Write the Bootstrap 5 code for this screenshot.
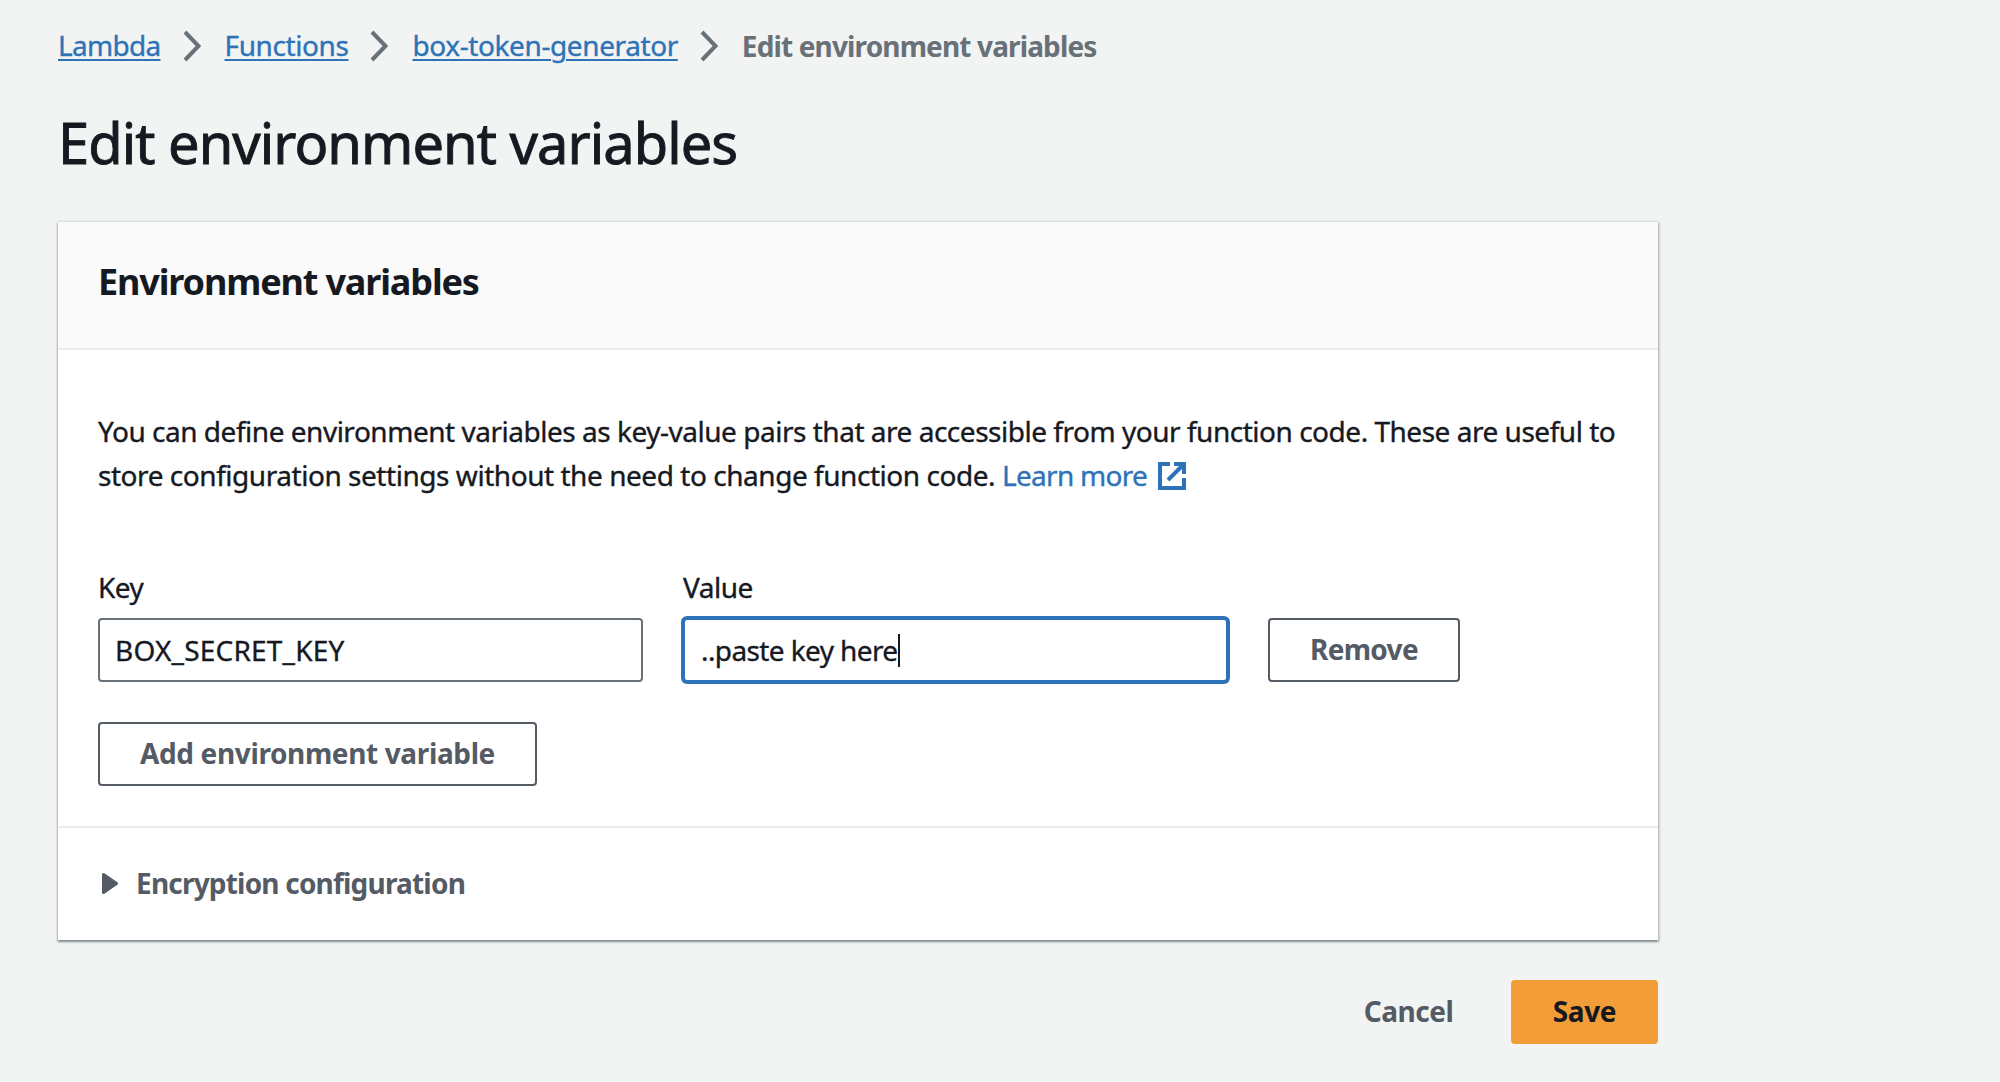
<!DOCTYPE html>
<html lang="en">
<head>
<meta charset="utf-8">
<title>Edit environment variables</title>
<meta name="viewport" content="width=device-width, initial-scale=1">
<link rel="stylesheet" href="https://cdn.jsdelivr.net/npm/bootstrap@5.3.0/dist/css/bootstrap.min.css">
<style>
body { background: #f2f4f3; color: #16191f; font-family: "Noto Sans", sans-serif; font-size: 28px; line-height: 44px; letter-spacing: -.48px; -webkit-text-stroke: .35px currentColor; overflow: hidden; }
.page { width: 1600px; margin-left: 58px; padding-top: 23px; }
.trail { height: 44px; white-space: nowrap; }
.trail a { color: #2e73b8; text-decoration-thickness: 2px; text-underline-offset: 3px; letter-spacing: -.4px; }
.trail .trail-first { letter-spacing: -.7px; }
.trail svg { width: 18px; height: 32px; flex: none; margin: 2px 24px 0 22px; }
.crumb-now { color: #687078; font-weight: 700; letter-spacing: -.86px; -webkit-text-stroke: 0; padding-top: 1px; }
.page-title { font-size: 56px; line-height: 70px; font-weight: 400; letter-spacing: -.95px; margin: 40px 0 45px; -webkit-text-stroke: .9px currentColor; }
.panel { border: 0; border-radius: 0; box-shadow: 0 2px 2px 0 rgba(0,28,36,.3), 1px 1px 2px 1px rgba(0,28,36,.15), -1px 1px 2px 0 rgba(0,28,36,.15), 0 -2px 0 0 #eaeded; }
.panel-head { background: #fafafa; border-bottom: 2px solid #eaeded; height: 128px; padding: 38px 40px 0; border-radius: 0 !important; }
.panel-head h2 { font-size: 36px; line-height: 44px; font-weight: 700; letter-spacing: -1.14px; margin: 0; -webkit-text-stroke: 0; }
.panel-main { padding: 59px 40px 40px; }
.intro a { color: #2e73b8; text-decoration: none; letter-spacing: -.7px; }
.intro { white-space: nowrap; margin-bottom: 68px; }
.intro .intro-end { letter-spacing: -.455px; }
.intro svg { width: 28px; height: 28px; margin-left: 4px; vertical-align: -4px; }
.fields { gap: 40px; }
.field-col { width: 545px; }
.field-col label { display: block; height: 44px; margin-bottom: 9px; }
.field-box { height: 64px; border: 2px solid #687078; border-radius: 4px; padding: 0 15px; font-size: 28px; color: #16191f; background: #fff; line-height: 60px; letter-spacing: .2px; }
.field-active { border-color: #2e73b8; box-shadow: 0 0 0 2px #2e73b8; letter-spacing: -.6px; padding-left: 16px; }
.caret { width: 2px; height: 33px; background: #16191f; }
.action { height: 64px; border: 2px solid #545b64; border-radius: 4px; font-size: 28px; line-height: 44px; font-weight: 700; color: #545b64; padding: 7px 0 9px; letter-spacing: -.37px; -webkit-text-stroke: 0; }
.action-remove { width: 192px; background: #fff; letter-spacing: -.7px; }
.action-add { width: 439px; background: #fff; margin-top: 40px; }
.action-save { width: 147px; background: #f29d38; border-color: #f29d38; color: #16191f; }
.action-cancel { border-color: transparent; width: 149px; letter-spacing: -.5px; }
.panel-more { border-top: 2px solid #eaeded; height: 114px; padding: 0 40px 2px 44px; color: #545b64; font-weight: 700; letter-spacing: -.8px; -webkit-text-stroke: 0; }
.panel-more svg { width: 16px; height: 21px; margin-right: 18px; }
.page-actions { margin-top: 40px; gap: 28px; }
</style>
<script src="https://cdn.jsdelivr.net/npm/bootstrap@5.3.0/dist/js/bootstrap.bundle.min.js"></script>
</head>
<body>
<main class="page">
  <nav class="trail d-flex align-items-center" aria-label="breadcrumb">
    <a class="trail-first" href="#">Lambda</a>
    <svg viewBox="0 0 18 32"><path d="M2 2 15.500 16 2 30" fill="none" stroke="#687078" stroke-width="4"/></svg>
    <a href="#">Functions</a>
    <svg viewBox="0 0 18 32"><path d="M2 2 15.500 16 2 30" fill="none" stroke="#687078" stroke-width="4"/></svg>
    <a href="#">box-token-generator</a>
    <svg viewBox="0 0 18 32"><path d="M2 2 15.500 16 2 30" fill="none" stroke="#687078" stroke-width="4"/></svg>
    <span class="crumb-now">Edit environment variables</span>
  </nav>
  <h1 class="page-title">Edit environment variables</h1>

  <section class="card panel">
    <div class="card-header panel-head"><h2>Environment variables</h2></div>
    <div class="card-body panel-main">
      <p class="intro">You can define environment variables as key-value pairs that are accessible from your function code. These are useful to<br><span class="intro-end">store configuration settings without the need to change function code.</span> <a href="#">Learn more
        <svg viewBox="0 0 28 28" fill="none" stroke="#2e73b8" stroke-width="4"><path d="M12 2H2V26H26V16"/><path d="M16 2H26V12M26 2 10 18"/></svg></a></p>
      <div class="fields d-flex align-items-end">
        <div class="field-col">
          <label for="envKey">Key</label>
          <input id="envKey" class="form-control field-box" value="BOX_SECRET_KEY">
        </div>
        <div class="field-col">
          <label>Value</label>
          <div class="form-control field-box field-active d-flex align-items-center"><span>..paste key here</span><span class="caret"></span></div>
        </div>
        <button class="btn action action-remove">Remove</button>
      </div>
      <button class="btn action action-add">Add environment variable</button>
    </div>
    <div class="panel-more d-flex align-items-center">
      <svg viewBox="0 0 16 21"><path d="M1.500 1.500 14.500 10.500 1.500 19.500Z" fill="#545b64" stroke="#545b64" stroke-width="3" stroke-linejoin="round"/></svg>
      <span>Encryption configuration</span>
    </div>
  </section>

  <div class="page-actions d-flex justify-content-end">
    <button class="btn action action-cancel">Cancel</button>
    <button class="btn action action-save">Save</button>
  </div>
</main>
</body>
</html>
